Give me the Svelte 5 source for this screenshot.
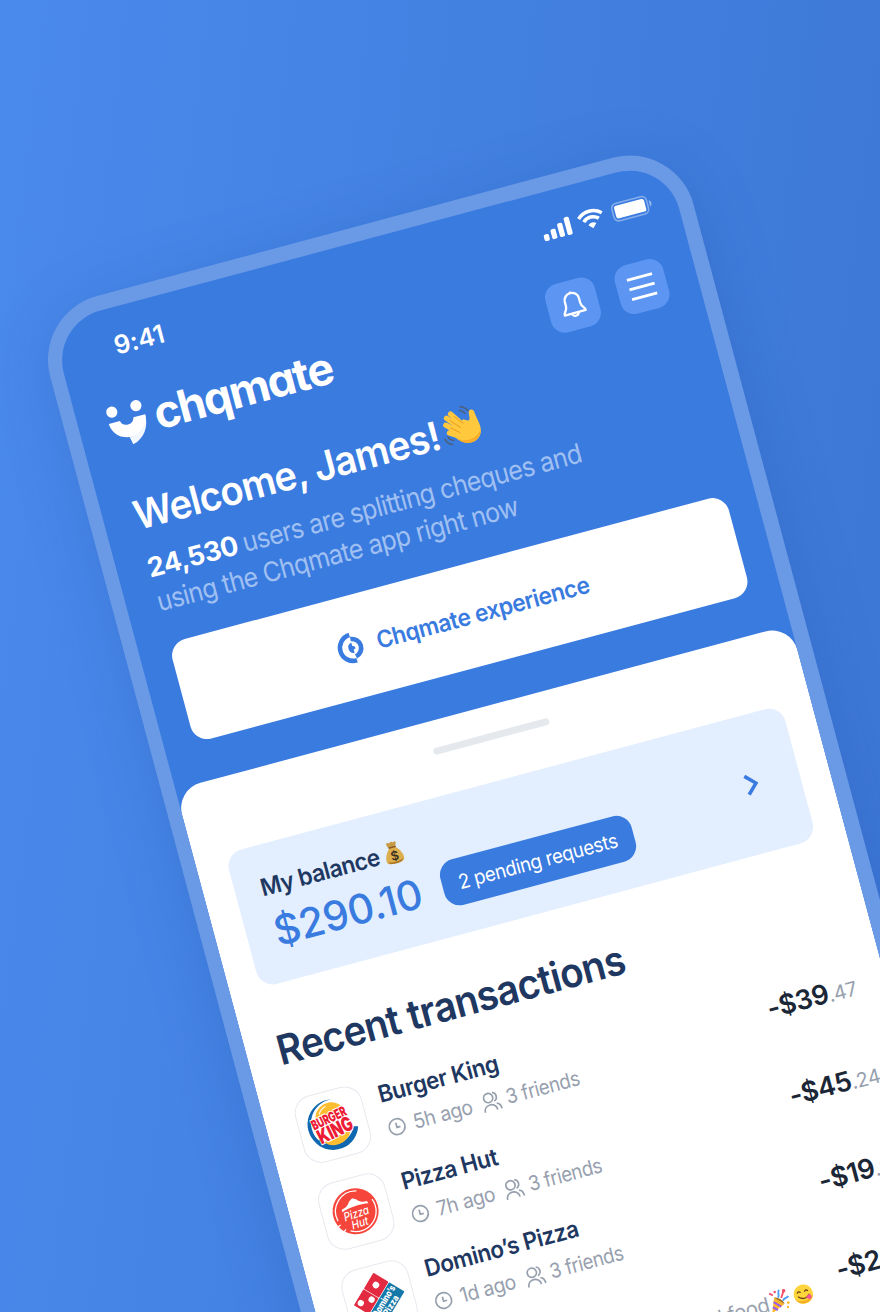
<script>
  const rows = [
    { logo: 'bk', name: 'Burger King', ago: '5h ago', who: '3 friends', main: '-$39', cents: '.47' },
    { logo: 'hut', name: 'Pizza Hut', ago: '7h ago', who: '3 friends', main: '-$45', cents: '.24' },
    { logo: 'dom', name: 'Domino’s Pizza', ago: '1d ago', who: '3 friends', main: '-$19', cents: '.84' },
    { logo: 'none', name: 'Subway', ago: '2d ago', who: '3 friends', main: '-$28', cents: '.40', note: 'Good food' }
  ];
</script>

<main class="stage">
  <div class="scene">
    <div class="device">
      <div class="screen">
        <div class="status">
          <span class="time">9:41</span>
          <div class="status-icons">
            <svg width="29" height="18.4" viewBox="0 0 29 18.4" fill="#fff">
              <rect x="0" y="11.6" width="5.3" height="6.8" rx="1.8" /><rect x="7.9" y="8.2" width="5.3" height="10.2" rx="1.8" />
              <rect x="15.8" y="4.2" width="5.3" height="14.2" rx="1.8" /><rect x="23.7" y="0" width="5.3" height="18.4" rx="1.8" />
            </svg>
            <svg width="26.4" height="19" viewBox="0 0 26.4 19" fill="none" stroke="#fff" stroke-width="3.5">
              <path d="M1.2 6.3a17.2 17.2 0 0 1 24 0" /><path d="M5.4 10.7a11.1 11.1 0 0 1 15.6 0" />
              <path d="M13.2 19l-4.1-4.2a6 6 0 0 1 8.2 0z" fill="#fff" stroke="none" />
            </svg>
            <svg width="41" height="19.4" viewBox="0 0 41 19.4">
              <rect x=".8" y=".8" width="35.8" height="17.8" rx="4.8" fill="none" stroke="#fff" stroke-opacity=".38" stroke-width="1.6" />
              <rect x="3.2" y="3.2" width="31" height="13" rx="2.4" fill="#fff" /><path d="M38.6 6.4v6.6c2.8-1.2 2.8-5.4 0-6.6z" fill="#fff" fill-opacity=".45" />
            </svg>
          </div>
        </div>

        <header class="top">
          <svg class="mark" width="38" height="44" viewBox="-5 421 38 44">
            <circle cx="1.3" cy="427" r="5.6" fill="#fff" /><circle cx="26.3" cy="427" r="5.6" fill="#fff" />
            <path d="M11.500 453L13.800 463.700C26 460.600 33 450.500 33 437.600z" fill="#f3f7fe" />
            <path d="M13.500 456.500C20 456.500 27 453 30.500 447L27 446 13 454z" fill="#dbe6fa" />
            <path d="M-4.600 437.600H6.900a7.200 7.200 0 0 0 14 0H33a18.800 18.200 0 0 1-37.600 0z" fill="#fff" />
          </svg>
          <span class="brand">chqmate</span>
          <div class="actions">
            <div class="action">
              <svg width="25.500" height="29.500" viewBox="0 0 26 30" fill="none" stroke="#fff" stroke-width="2.4" stroke-linejoin="round">
                <path d="M13 2.700a7.400 7.400 0 0 0-7.500 7.600v4.500c0 2.300-.9 3.600-2.200 5.300-.9 1.100-1.300 1.800-1.300 3.300h22c0-1.500-.4-2.200-1.300-3.300-1.300-1.700-2.200-3-2.200-5.300v-4.500A7.400 7.400 0 0 0 13 2.700z" />
                <path d="M11.900 2.300h2.200M9.600 23.600c.3 3.800 6.500 3.800 6.800 0" />
              </svg>
            </div>
            <div class="action">
              <svg width="26" height="24" viewBox="0 0 26 24" stroke="#fff" stroke-width="2.8"><path d="M0 2h26M0 12h26M0 22h26" /></svg>
            </div>
          </div>
        </header>

        <section class="intro">
          <h1><span class="slim hello">Welcome, James!</span>
            <svg class="wave" width="42" height="42" viewBox="0 0 42 42">
              <g fill="none" stroke="#ffc83d" stroke-width="5.2" stroke-linecap="round">
                <path d="M20 23L9 9.500M23 20L14 6.500M18 27L6.500 16M18 31L8 24.500" />
              </g>
              <path d="M15 20L25 15C29 18 30.500 18 31.300 15.500L32 9.500c.5-3.300 5.500-2.500 5.500.8 0 6 2.500 11 2 17.500-.6 8-7 12-13.500 11.500-6-.5-10-4.300-13-8.300z" fill="#ffc83d" />
              <path d="M39 29c-1.500 7-7 10.500-13 10.300-5.500-.3-9-3.300-12-6.800 8 5 19 5.500 25-3.500z" fill="#f9ad2a" />
              <path d="M11.500 12.500l9 10M10 19.500l8.500 7.500M16.500 9.500l7.500 9.500" stroke="#e79a20" stroke-width=".9" fill="none" />
              <path d="M25 2c3.300 1 5.500 3 7 6M23.500 5.500c2.200.8 3.800 2.200 4.800 4.300M2 29.500c.8 3.400 2.700 5.600 6 7M5.500 28c.8 2.600 2.300 4.200 4.700 5" fill="none" stroke="#4d6077" stroke-width="1.500" stroke-linecap="round" />
            </svg>
          </h1>
          <p><span class="l1"><b>24,530</b><span class="slim copy">users are splitting cheques and</span></span><span class="slim copy">using the Chqmate app right now</span></p>
        </section>

        <div class="cta">
          <svg width="31" height="32" viewBox="-16 -16 31 32" fill="none" stroke="#3a7be0">
            <path d="M0-13.200A13.200 13.200 0 1 0 1 13.200" stroke-width="4.600" /><path d="M0-9A9.200 9.200 0 0 1 1 9.200" stroke-width="4.600" />
            <path d="M0-5.500A5.600 5.600 0 0 0 .500 5.500V2L2.800 1.200A3 3 0 0 0 0-1.800z" fill="#3a7be0" stroke="none" />
          </svg>
          <span class="slim">Chqmate experience</span>
        </div>

        <section class="sheet">
          <div class="handle"></div>
          <div class="balance">
            <div>
              <div class="label"><span class="slim">My balance</span>
                <svg width="19" height="24" viewBox="0 0 20 25">
                  <path d="M6.500 7C4 4.500 4.500 2 5.500 1.500c1.500 0 2 1 3 .5 1-1 2-1 3 0 1 .5 2-.5 3-.2 1 .7.500 3.200-2 5.200z" fill="#c99a45" />
                  <path d="M7 7.500h6c3.500 3 6.500 8 6.500 12.500 0 3.500-3 4.600-9.500 4.600S.500 23.500.500 20C.500 15.500 3.500 10.500 7 7.500z" fill="#dcae4e" />
                  <path d="M2 21.500c4 2 12 2 16-.500-1 3-4 3.600-8 3.600s-7-.6-8-3.100z" fill="#aa7427" /><path d="M6 7.200h8" stroke="#8b5a1f" stroke-width="1.600" />
                  <text x="10" y="21" text-anchor="middle" font-size="13" font-weight="600" fill="#3b301f">$</text>
                </svg>
              </div>
              <div class="money"><span class="sum">$290.10</span><span class="pill"><span class="slim">2 pending requests</span></span></div>
            </div>
            <svg width="15" height="24" viewBox="0 0 15 24" fill="none" stroke="#3a7be0" stroke-width="3.600"><path d="M2 2.500L11.500 12 2 21.500" /></svg>
          </div>

          <h2><span class="slim">Recent transactions</span></h2>

          <ul>
            {#each rows as r}
              <li>
                <div class="tile">
                  {#if r.logo === 'bk'}
                    <svg width="54" height="54" viewBox="-27 -27 54 54">
                      <path d="M6-24.300A25 25 0 0 0-20.500 14l3.500-1.500A23.800 23.800 0 0 1 6-24.300z" fill="#0f67b0" />
                      <path d="M-20.500 14A25 25 0 0 0 24.500 8.500l-4.500-1A21 21 0 0 1-16 11z" fill="#0f67b0" />
                      <path d="M-15-9C-13-20-2-23.500 5-21.500c6 2 9.500 6 10 11z" fill="#fdbd2e" /><path d="M-12 15l28-4.500C13 18 6 21 0 21-5 21-10 19-12 15z" fill="#fdbd2e" />
                      <path d="M-10-13c2-4 5-5.500 8-6" stroke="#fff" fill="none" />
                      <g fill="#ed1c35" stroke="#fff" stroke-width="2" paint-order="stroke" font-weight="900" transform="rotate(-11)">
                        <text x="-19" y="-2" font-size="14" textLength="37" lengthAdjust="spacingAndGlyphs">BURGER</text>
                        <text x="-18.500" y="13.500" font-size="20" textLength="37" lengthAdjust="spacingAndGlyphs">KING</text>
                      </g>
                    </svg>
                  {:else if r.logo === 'hut'}
                    <svg width="50" height="50" viewBox="-25 -25 50 50">
                      <circle r="23" fill="#f6453a" /><path d="M-19.500 5A20.300 20.300 0 0 1 6-19.400M19-7.500A20.300 20.300 0 0 1-10 17.700" fill="none" stroke="#fff" stroke-width="1.300" />
                      <path d="M-22 11l4-1.500M-17 17.500l3-2.500" stroke="#fff" stroke-width="1.300" />
                      <path d="M-13-5c5-1 8-3.500 9-6l4-2.500 4 2.500c1.500 2.500 4.500 4 9.500 4l1 2.500C7-6-6-5.500-13-2.500z" fill="#fff" />
                      <g fill="#fff" font-weight="500" font-style="italic" transform="rotate(-3)"><text x="-13" y="6.500" font-size="12" textLength="26" lengthAdjust="spacingAndGlyphs">Pizza</text>
                      <text x="-8" y="16.500" font-size="11.500" textLength="17" lengthAdjust="spacingAndGlyphs">Hut</text></g>
                    </svg>
                  {:else if r.logo === 'dom'}
                    <svg width="56" height="56" viewBox="-28 -28 56 56">
                      <g transform="rotate(-44)">
                        <rect x="-19" y="-17.800" width="18.700" height="17.600" rx="1" fill="#e22b40" /><rect x=".300" y="-17.800" width="18.700" height="17.600" rx="1" fill="#e22b40" />
                        <rect x="-19" y=".500" width="38" height="18" rx="1" fill="#1478a8" />
                        <circle cx="9.700" cy="-9.300" r="3.300" fill="#fff" /><circle cx="-5" cy="-5.500" r="3.100" fill="#fff" /><circle cx="-13.500" cy="-13" r="3.100" fill="#fff" />
                        <g fill="#fff" font-weight="800"><text x="-17.500" y="9" font-size="9.500" textLength="35" lengthAdjust="spacingAndGlyphs">Domino’s</text>
                        <text x="-11" y="17" font-size="9" textLength="22" lengthAdjust="spacingAndGlyphs">Pizza</text></g>
                      </g>
                    </svg>
                  {/if}
                </div>
                <div class="info">
                  <div class="name"><span class="slim">{r.name}</span></div>
                  <div class="meta">
                    <svg width="18" height="18" viewBox="0 0 18 18" fill="none" stroke="#97a0ae" stroke-width="1.700"><circle cx="9" cy="9" r="7.900" /><path d="M8.700 5v4.700h3.600" /></svg>
                    <span class="slim ago">{r.ago}</span>
                    <svg class="ppl" width="19" height="20" viewBox="0 0 19 20" fill="none" stroke="#97a0ae" stroke-width="1.700">
                      <circle cx="7.300" cy="6" r="4.600" /><path d="M.900 19.500c0-8.500 12.800-8.500 12.800 0M12.500 1.500a4.800 4.800 0 0 1 0 9M14.300 13c2.600.8 3.900 3 3.900 6.500" />
                    </svg>
                    <span class="slim who">{r.who}</span>
                    {#if r.note}
                      <span class="note">{r.note}
                        <svg class="party" width="22" height="24" viewBox="0 0 21 22">
                          <path d="M1 21L6.500 7l8 8.500z" fill="#fcb827" /><path d="M3 15.500l4 3.800M5 11l6 6" stroke="#9b5de5" stroke-width="2" /><path d="M6.500 7c3-.5 9 5.500 8 8.500" fill="#a86b1a" />
                          <path d="M10 8c3-2 0-5 3-7M14 12c2-3 4-1 6-3" stroke="#4b9cf5" stroke-width="1.800" fill="none" /><path d="M13 9l4-6M3 2l3 2.500" stroke="#f2536b" stroke-width="1.800" /><g fill="#f2536b"><circle cx="17" cy="3" r="1.700" /><circle cx="8.500" cy="2" r="1.200" /></g><g fill="#fcb827"><circle cx="18.500" cy="15" r="1.300" /><circle cx="17" cy="19" r="1.100" /></g>
                        </svg>
                        <svg width="20" height="20" viewBox="0 0 20 20"><circle cx="10" cy="10" r="9.700" fill="#fdd43a" /><path d="M1 13a9.700 9.700 0 0 0 18 0c-4 5-14 5-18 0z" fill="#f5ae22" />
                          <path d="M4.500 7.500q1.500-2 3 0M12 7.500q1.500-2 3 0M4.500 11.500q5.500 5.500 11 0" fill="none" stroke="#6a4312" stroke-width="1.300" stroke-linecap="round" /><path d="M12 13.500l3-2c2.500 0 3.500 3.500 1 4.500-2 .5-3.500-.8-4-2.500z" fill="#f2559a" /></svg>
                      </span>
                    {/if}
                  </div>
                </div>
                <div class="price"><b>{r.main}</b><span>{r.cents}</span></div>
              </li>
            {/each}
          </ul>
        </section>
      </div>
    </div>
  </div>
</main>

<style>
  :global(body) { margin: 0; }
  .stage { width: 880px; height: 1312px; overflow: hidden; background: linear-gradient(97deg, #4a8aec 0%, #4280df 52%, #3d76d4 100%); font-family: Inter, 'Liberation Sans', sans-serif; }
  svg { display: block; flex: none; overflow: visible; }
  .slim { display: inline-block; transform: scaleX(.947); transform-origin: 0 50%; }
  .scene { transform: rotate(-15deg); transform-origin: 0 0; padding-top: 311px; width: 900px; }
  .device { width: 637px; margin-left: -49.500px; padding: 14.500px; background: #6a9ae6; border-radius: 66px; box-shadow: 0 10px 60px rgba(25, 75, 165, .22); }
  .screen { background: #3a7be0; border-radius: 51.500px 51.500px 0 0; height: 1400px; overflow: hidden; white-space: nowrap; }
  .status { display: flex; justify-content: space-between; align-items: center; height: 30px; padding: 24px 25.300px 0 56px; color: #fff; }
  .time { font-size: 25.500px; font-weight: 560; line-height: 30px; letter-spacing: -.1px; margin-top: -2px; }
  .status-icons { display: flex; align-items: center; gap: 8.200px; padding-top: 1px; }
  .top { display: flex; align-items: flex-start; padding: 38.400px 30.800px 0 29.800px; color: #fff; }
  .mark { margin-top: 2.800px; }
  .brand { font-size: 45px; font-weight: 700; line-height: 43px; font-feature-settings: 'cv11'; margin-left: 9px; letter-spacing: -1.700px; }
  .actions { display: flex; gap: 20.800px; margin-left: auto; }
  .action { width: 50.600px; height: 50.600px; border-radius: 14px; background: #5c96f2; display: grid; place-items: center; }
  .intro { padding: 41.200px 30.700px 0; color: #fff; }
  h1 { margin: 0; display: flex; align-items: center; font-size: 40px; line-height: 48px; font-weight: 600; height: 48px; letter-spacing: -.8px; }
  .hello { transform: scaleX(.954); }
  .wave { margin: -6px 0 0 -12.500px; }
  p { margin: 12.700px 0 0; font-size: 27px; line-height: 35px; color: #a0c0f2; letter-spacing: -.700px; }
  .l1 { display: flex; gap: 6px; }
  .copy { transform: scaleX(.928); }
  p b { color: #fff; font-weight: 700; letter-spacing: -.5px; }
  .cta { margin: 25px 30.500px 0; height: 102.400px; border-radius: 17px; background: #fff; color: #3a7be0; display: flex; align-items: center; padding-left: 161px; gap: 10px; font-size: 24px; font-weight: 560; letter-spacing: -.500px; }
  .sheet { margin-top: 40.200px; background: #fff; height: 800px; border-radius: 26px 26px 0 0; padding: 27.300px 30.500px 0; }
  .handle { width: 120px; height: 7px; border-radius: 4px; background: #e5e9ee; margin: 0 auto; }
  .balance { margin-top: 40.300px; height: 139px; border-radius: 17px; background: #e3efff; display: flex; justify-content: space-between; align-items: center; padding: 0 41px 0 26.800px; }
  .label { display: flex; align-items: center; font-size: 24px; line-height: 30px; height: 30px; font-weight: 580; color: #1f3861; letter-spacing: -.5px; }
  .label svg { margin: -2px 0 0 -1.500px; }
  .money { display: flex; align-items: center; margin-top: 7px; height: 46px; }
  .sum { width: 156px; font-size: 41px; line-height: 46px; font-weight: 530; color: #3a7be0; margin-left: 1.500px; letter-spacing: -.450px; }
  .pill { margin-left: 18px; height: 47.200px; width: 198px; border-radius: 16px; display: flex; align-items: center; justify-content: center; background: #3a7be0; color: #fff; font-size: 20px; letter-spacing: -.400px; }
  .pill .slim { transform: scaleX(.936); transform-origin: 50% 50%; }
  h2 { margin: 41.200px 0 0; font-size: 41px; line-height: 48px; font-weight: 600; color: #1f3861; letter-spacing: -.8px; }
  h2 .slim { transform: scaleX(.943); }
  ul { list-style: none; margin: 26.900px 0 0; padding: 0; display: grid; gap: 22px; }
  li { display: flex; height: 68px; }
  .tile { box-sizing: border-box; width: 69px; height: 69px; border: 1.500px solid #e6e9ee; border-radius: 18px; display: grid; place-items: center; }
  .info { padding-top: 3px; margin-left: 17px; }
  .name { font-size: 23.700px; line-height: 30px; font-weight: 600; color: #1f3861; letter-spacing: -.450px; }
  .meta { margin: 7.600px 0 0 1.800px; display: flex; align-items: center; font-size: 20.500px; line-height: 26px; color: #97a0ae; letter-spacing: -.450px; }
  .ago { margin: 0 7px 0 8px; }
  .ppl { margin-right: 6px; }
  .who { transform: scaleX(.915); }
  .note { margin: -5px 0 0 18.500px; display: flex; align-items: center; gap: 4px; }
  .note svg { margin-top: -1px; }
  .note .party { margin-left: -4px; }
  .price { margin-left: auto; padding-top: 18.900px; line-height: 34px; display: flex; align-items: baseline; }
  .price b { font-size: 27px; font-weight: 600; color: #1b2736; letter-spacing: -.5px; }
  .price span { font-size: 20px; color: #97a0ae; letter-spacing: -.4px; }
</style>
